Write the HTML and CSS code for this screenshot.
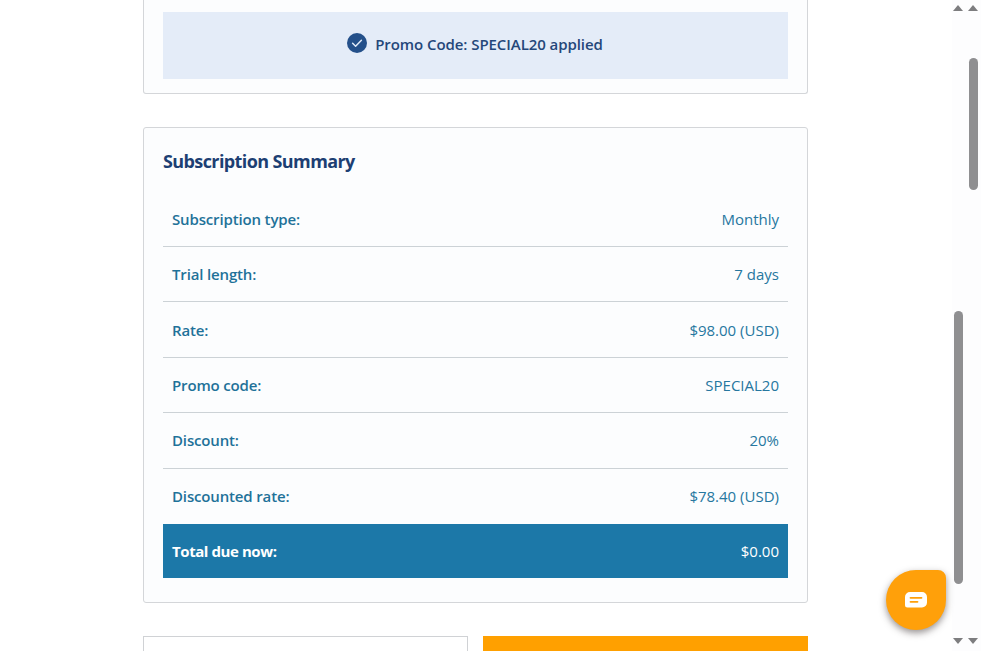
FILE: index.html
```html
<!DOCTYPE html>
<html lang="en">
<head>
<meta charset="utf-8">
<title>Subscription Summary</title>
<link rel="stylesheet" href="styles.css">
</head>
<body>
<div class="page">
  <main class="content">
    <section class="card card-top">
      <div class="promo">
        <svg class="promo-icon" viewBox="0 0 20 20" aria-hidden="true"><circle cx="10" cy="10" r="10" fill="#24508a"/><path d="M5.6 10.3l3 3 5.8-6" fill="none" stroke="#dfe9f7" stroke-width="1.5" stroke-linecap="round" stroke-linejoin="round"/></svg>
        <span>Promo Code: SPECIAL20 applied</span>
      </div>
    </section>
    <section class="card card-summary">
      <h2 class="summary-title">Subscription Summary</h2>
      <div class="row"><span class="label">Subscription type:</span><span>Monthly</span></div>
      <div class="row"><span class="label">Trial length:</span><span>7 days</span></div>
      <div class="row"><span class="label">Rate:</span><span>$98.00 (USD)</span></div>
      <div class="row"><span class="label">Promo code:</span><span>SPECIAL20</span></div>
      <div class="row"><span class="label">Discount:</span><span>20%</span></div>
      <div class="row row-last"><span class="label">Discounted rate:</span><span>$78.40 (USD)</span></div>
      <div class="row row-total"><span class="label">Total due now:</span><span>$0.00</span></div>
    </section>
    <div class="actions">
      <div class="btn btn-back"></div>
      <div class="btn btn-next"></div>
    </div>
  </main>
  <div class="gutter">
    <div class="track">
      <span class="arrow arrow-up"></span>
      <div class="track-body track-inner"><div class="thumb thumb-inner"></div></div>
      <span class="arrow arrow-down"></span>
    </div>
    <div class="track">
      <span class="arrow arrow-up"></span>
      <div class="track-body track-outer"><div class="thumb thumb-outer"></div></div>
      <span class="arrow arrow-down"></span>
    </div>
  </div>
</div>
<div class="chat">
  <svg viewBox="0 0 24 18" width="24" height="18" aria-hidden="true"><path d="M6 1h12a5 5 0 0 1 5 5v5.5a5 5 0 0 1-5 5H3.5a2.5 2.5 0 0 1-2.5-2.5V6a5 5 0 0 1 5-5z" fill="#fff"/><path d="M6.5 6.8h11M6.5 10.8h7" stroke="#ffa00a" stroke-width="1.8" stroke-linecap="round"/></svg>
</div>
</body>
</html>
```
FILE: styles.css
```css
* { box-sizing: border-box; }
html, body { margin: 0; height: 100%; overflow: hidden; background: #fff; }
body { font-family: "Open Sans", "Liberation Sans", sans-serif; font-size: 15px; color: #26779f; }

.page { display: flex; height: 651px; }
.content { flex: 1; padding: 0 0 0 143px; min-width: 0; overflow: hidden; }

.card {
  width: 665px;
  background: #fcfdfe;
  border: 1px solid #d4d6d9;
  border-radius: 3px;
  padding: 0 19px;
}
.card-top { border-top: 0; border-radius: 0 0 3px 3px; padding-top: 12px; padding-bottom: 14px; height: 94px; }
.card-summary { margin-top: 33px; padding-bottom: 24px; height: 476px; }

.promo {
  display: flex;
  align-items: center;
  justify-content: center;
  gap: 8px;
  height: 67px;
  padding: 0 1px 4px 0;
  background: #e4ecf8;
  color: #24477a;
  font-weight: 600;
  letter-spacing: -0.07px;
}
.promo-icon { width: 20px; height: 20px; margin-top: -2px; }

.summary-title {
  margin: 0;
  padding-top: 20px;
  height: 63.6px;
  font-size: 18px;
  line-height: 26px;
  font-weight: 700;
  letter-spacing: -0.6px;
  color: #1d3f73;
}

.row {
  display: flex;
  justify-content: space-between;
  align-items: center;
  height: 55.4px;
  padding: 0 9px;
  border-bottom: 1px solid #ccd2d6;
}
.label { font-weight: 600; letter-spacing: -0.15px; color: #1f7299; }
.row-last { border-bottom: 0; }
.row-total { height: 54.4px; background: #1c78a8; color: #fff; border-bottom: 0; }
.row-total .label { font-weight: 700; letter-spacing: -0.42px; color: #fff; }

.actions { display: grid; grid-template-columns: 325px 325px; gap: 15px; width: 665px; margin-top: 33px; }
.btn { height: 50px; }
.btn-back { background: #fff; border: 1px solid #d0d2d5; }
.btn-next { background: #ffa000; }

.gutter { flex: none; width: 29px; display: flex; gap: 5px; padding-left: 1px; background: #fdfdfe; }
.track { display: flex; flex-direction: column; align-items: center; width: 10px; height: 651px; padding-top: 5px; }
.track-body { flex: 1; width: 9px; }
.track-inner { padding-top: 300px; padding-bottom: 54px; }
.track-outer { padding-top: 47px; padding-bottom: 448px; }
.thumb { height: 100%; border-radius: 5px; background: #8f8f91; }
.arrow { width: 0; height: 0; border-left: 5px solid transparent; border-right: 5px solid transparent; }
.arrow-up { border-bottom: 6px solid #7d7d7f; }
.arrow-down { border-top: 6px solid #7d7d7f; margin-bottom: 7px; }

.chat {
  position: absolute;
  left: 886px;
  top: 570px;
  width: 60px;
  height: 60px;
  display: flex;
  align-items: center;
  justify-content: center;
  background: #ffa00a;
  border-radius: 50% 8px 50% 50%;
  box-shadow: 0 3px 7px rgba(50, 40, 40, 0.5);
}
```
